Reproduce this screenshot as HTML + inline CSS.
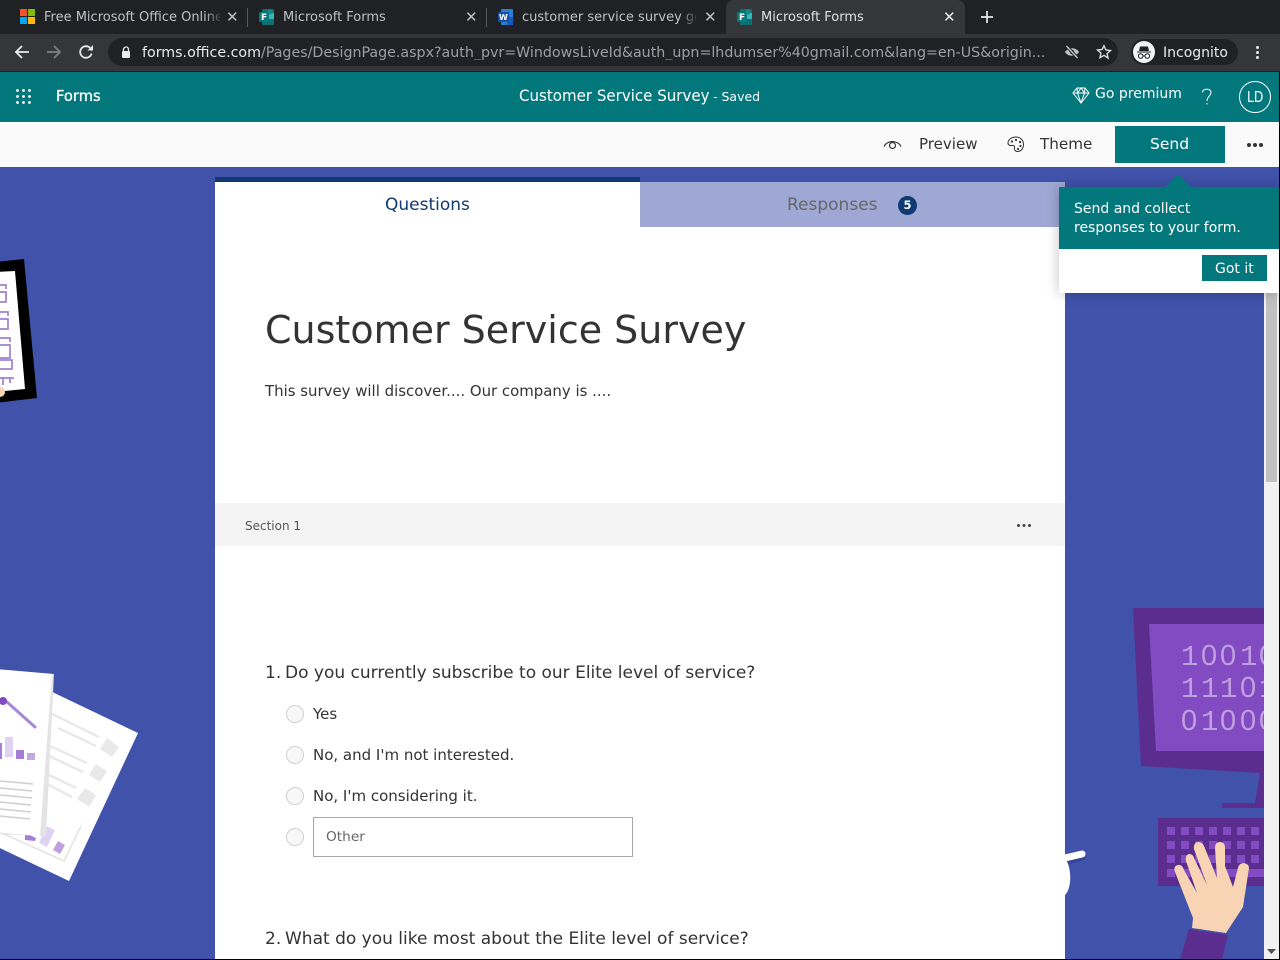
<!DOCTYPE html>
<html><head><meta charset="utf-8"><title>Microsoft Forms</title>
<style>
html,body{margin:0;padding:0;width:1280px;height:960px;overflow:hidden;background:#4052aa}
body{position:relative;font-family:"DejaVu Sans",sans-serif}
.a{position:absolute}
.t{position:absolute;white-space:nowrap;line-height:1}
.c{color:#333}
.sep{position:absolute;top:8px;width:1px;height:19px;background:#55585c}
.radio{position:absolute;left:286px;width:16px;height:16px;border:1px solid #d0d0d0;border-radius:50%;background:#f8f8f8}
svg{position:absolute;overflow:visible}
</style></head><body>

<!-- browser chrome -->
<div class="a" style="left:0;top:0;width:1280px;height:34px;background:#202124"></div>
<div class="a" style="left:0;top:34px;width:1280px;height:37px;background:#35363a"></div>
<div class="a" style="left:0;top:71px;width:1280px;height:1px;background:#1f2124"></div>
<div class="a" style="left:726px;top:0;width:239px;height:34px;background:#35363a;border-radius:8px 8px 0 0"></div>

<div class="a" style="left:20px;top:9px;width:7px;height:7px;background:#f35325"></div>
<div class="a" style="left:28px;top:9px;width:7px;height:7px;background:#81bc06"></div>
<div class="a" style="left:20px;top:17px;width:7px;height:7px;background:#05a6f0"></div>
<div class="a" style="left:28px;top:17px;width:7px;height:7px;background:#ffba08"></div>
<div class="t" style="left:44px;top:11px;font-size:13px;color:#bdc1c6;width:176px;overflow:hidden">Free Microsoft Office Online</div>
<div class="a" style="left:205px;top:6px;width:18px;height:20px;background:linear-gradient(90deg,rgba(32,33,36,0),#202124)"></div>
<div class="t" style="left:226px;top:10px;font-size:15px;color:#bdc1c6">✕</div>
<div class="sep" style="left:247px"></div>

<svg style="left:259px;top:9px" width="16" height="16" viewBox="0 0 16 16"><rect x="3" y="0" width="12" height="16" rx="1" fill="#0f6f72"/><rect x="8" y="4" width="7" height="6" fill="#37b5b5"/><circle cx="11" cy="3" r="2.5" fill="#14898c"/><rect x="0" y="3" width="10" height="10" rx="1" fill="#057a78"/><text x="2" y="11.200" font-size="9" font-weight="bold" fill="#fff" font-family="DejaVu Sans">F</text></svg>
<div class="t" style="left:283px;top:11px;font-size:13px;color:#bdc1c6">Microsoft Forms</div>
<div class="t" style="left:465px;top:10px;font-size:15px;color:#bdc1c6">✕</div>
<div class="sep" style="left:486px"></div>

<svg style="left:498px;top:9px" width="16" height="16" viewBox="0 0 16 16"><rect x="3" y="0" width="12" height="16" rx="1" fill="#2b7cd3"/><rect x="9" y="8" width="6" height="8" fill="#185abd"/><rect x="0" y="3" width="11" height="10" rx="1" fill="#1650aa"/><text x="1" y="11" font-size="8" font-weight="bold" fill="#fff" font-family="DejaVu Sans">W</text></svg>
<div class="t" style="left:522px;top:11px;font-size:13px;color:#bdc1c6;width:174px;overflow:hidden">customer service survey go</div>
<div class="a" style="left:680px;top:6px;width:18px;height:20px;background:linear-gradient(90deg,rgba(32,33,36,0),#202124)"></div>
<div class="t" style="left:704px;top:10px;font-size:15px;color:#bdc1c6">✕</div>

<svg style="left:737px;top:9px" width="16" height="16" viewBox="0 0 16 16"><rect x="3" y="0" width="12" height="16" rx="1" fill="#0f6f72"/><rect x="8" y="4" width="7" height="6" fill="#37b5b5"/><circle cx="11" cy="3" r="2.5" fill="#14898c"/><rect x="0" y="3" width="10" height="10" rx="1" fill="#057a78"/><text x="2" y="11.200" font-size="9" font-weight="bold" fill="#fff" font-family="DejaVu Sans">F</text></svg>
<div class="t" style="left:761px;top:11px;font-size:13px;color:#dfe1e5">Microsoft Forms</div>
<div class="t" style="left:943px;top:10px;font-size:15px;color:#e8eaed">✕</div>
<svg style="left:980px;top:10px" width="14" height="14" viewBox="0 0 14 14"><path d="M7 1v12M1 7h12" stroke="#e8eaed" stroke-width="1.7"/></svg>

<!-- toolbar -->
<svg style="left:14px;top:44px" width="16" height="16" viewBox="0 0 16 16" fill="none" stroke="#e8eaed" stroke-width="1.8"><path d="M15 8H2M8 2L2 8l6 6"/></svg>
<svg style="left:46px;top:44px" width="16" height="16" viewBox="0 0 16 16" fill="none" stroke="#7d7f83" stroke-width="1.8"><path d="M1 8h13M8 2l6 6-6 6"/></svg>
<svg style="left:78px;top:44px" width="16" height="16" viewBox="0 0 16 16" fill="none"><path d="M13.600 9.500A5.800 5.800 0 1 1 12 3.800" stroke="#e8eaed" stroke-width="1.800"/><path d="M9.500 6.500H15V1z" fill="#e8eaed"/></svg>
<div class="a" style="left:108px;top:38px;width:1010px;height:28px;border-radius:14px;background:#202124"></div>
<svg style="left:121px;top:46px" width="10" height="12" viewBox="0 0 10 12"><path d="M2.500 5V3.500a2.500 2.500 0 0 1 5 0V5" fill="none" stroke="#e8eaed" stroke-width="1.300"/><rect x="1" y="5" width="8" height="7" rx="1" fill="#e8eaed"/></svg>
<div class="t" style="left:142px;top:46px;font-size:14.230px;color:#9aa0a6;width:905px;overflow:hidden"><span style="color:#e8eaed">forms.office.com</span>/Pages/DesignPage.aspx?auth_pvr=WindowsLiveId&amp;auth_upn=lhdumser%40gmail.com&amp;lang=en-US&amp;origin...</div>
<svg style="left:1064px;top:45px" width="16" height="14" viewBox="0 0 16 14"><path d="M1 7c3-5 11-5 14 0-3 5-11 5-14 0z" fill="#bdc1c6"/><circle cx="8" cy="7" r="2.200" fill="#202124"/><path d="M2.500 1l11 12" stroke="#202124" stroke-width="3.400"/><path d="M2.500 1l11 12" stroke="#bdc1c6" stroke-width="1.500"/></svg>
<svg style="left:1096px;top:44px" width="16" height="16" viewBox="0 0 16 16"><path d="M8 1.800l1.900 4.200 4.600.5-3.400 3.100.9 4.500L8 11.300l-4 2.300.9-4.500-3.400-3.100 4.600-.5z" fill="none" stroke="#dadce0" stroke-width="1.400"/></svg>
<div class="a" style="left:1131px;top:39px;width:107px;height:26px;border-radius:13px;background:#202124"></div>
<svg style="left:1133px;top:41px" width="22" height="22" viewBox="0 0 22 22"><circle cx="11" cy="11" r="11" fill="#f1f3f4"/><path d="M4 10.500h14v1H4zM7 5.500h8l1 4.500H6z" fill="#202124"/><circle cx="7.700" cy="15" r="2.300" fill="none" stroke="#202124" stroke-width="1"/><circle cx="14.300" cy="15" r="2.300" fill="none" stroke="#202124" stroke-width="1"/><path d="M10 15h2" stroke="#202124"/></svg>
<div class="t" style="left:1163px;top:46px;font-size:14px;color:#e8eaed">Incognito</div>
<div class="a" style="left:1256px;top:46px;width:3px;height:3px;border-radius:50%;background:#e8eaed;box-shadow:0 5px 0 #e8eaed,0 10px 0 #e8eaed"></div>

<!-- teal header -->
<div class="a" style="left:0;top:72px;width:1280px;height:50px;background:#03787c"></div>
<svg style="left:16px;top:89px" width="16" height="16" viewBox="0 0 16 16" fill="#fff"><circle cx="1.500" cy="1.500" r="1.400"/><circle cx="7.500" cy="1.500" r="1.400"/><circle cx="13.500" cy="1.500" r="1.400"/><circle cx="1.500" cy="7.500" r="1.400"/><circle cx="7.500" cy="7.500" r="1.400"/><circle cx="13.500" cy="7.500" r="1.400"/><circle cx="1.500" cy="13.500" r="1.400"/><circle cx="7.500" cy="13.500" r="1.400"/><circle cx="13.500" cy="13.500" r="1.400"/></svg>
<div class="t" style="left:56px;top:89px;font-size:15px;color:#fff;-webkit-text-stroke:.3px #fff;transform:scaleX(.98);transform-origin:left">Forms</div>
<div class="t" style="left:519px;top:88px;font-size:16px;color:#fff;transform:scaleX(.94);transform-origin:left">Customer Service Survey</div>
<div class="t" style="left:713px;top:91px;font-size:12.500px;color:#fff">- Saved</div>
<svg style="left:1072px;top:87px" width="18" height="17" viewBox="0 0 18 17" fill="none" stroke="#fff" stroke-width="1"><path d="M5 1h8l4 5-8 10L1 6zM1 6h16M5.500 6L9 16l3.500-10M5 1l.5 5L9 1l3.500 5L13 1"/></svg>
<div class="t" style="left:1095px;top:87px;font-size:14px;color:#fff">Go premium</div>
<svg style="left:1201px;top:88px" width="12" height="18" viewBox="0 0 12 18" fill="none" stroke="#fff" stroke-width="1"><path d="M1.500 4.500C1.500 0 10 0 10 4.500 10 8 6 8.500 6 13"/><path d="M6 15v1.500"/></svg>
<div class="a" style="left:1239px;top:81px;width:30px;height:30px;border:1px solid #fff;border-radius:50%"></div>
<div class="t" style="left:1247px;top:90px;font-size:15px;color:#fff;transform:scaleX(.82);transform-origin:left">LD</div>

<!-- command bar -->
<div class="a" style="left:0;top:122px;width:1280px;height:45px;background:#fafafa"></div>
<svg style="left:883px;top:137px" width="19" height="15" viewBox="0 0 19 15" fill="none" stroke="#333" stroke-width="1.200"><path d="M1 9.500C4 3 15 3 18 9.500"/><circle cx="9.500" cy="8.500" r="3"/></svg>
<div class="t" style="left:919px;top:137px;font-size:15.500px;color:#333;transform:scaleX(.97);transform-origin:left">Preview</div>
<svg style="left:1007px;top:136px" width="18" height="17" viewBox="0 0 18 17" fill="none" stroke="#333" stroke-width="1"><path d="M9 1C4 1 1 4 1 7c0 2 2 3 4 2.500 2-.5 3 1 2.500 2.500-.5 2 1 3.500 3 3.500 3.500 0 6-3 6-7S13.500 1 9 1z"/><circle cx="5" cy="5.500" r=".6" fill="#333"/><circle cx="9" cy="4" r=".6" fill="#333"/><circle cx="13" cy="6" r=".6" fill="#333"/><circle cx="13.500" cy="10" r=".6" fill="#333"/><circle cx="11" cy="13" r=".6" fill="#333"/></svg>
<div class="t" style="left:1040px;top:137px;font-size:15.500px;color:#333;transform:scaleX(.98);transform-origin:left">Theme</div>
<div class="a" style="left:1115px;top:126px;width:110px;height:37px;background:#03787c"></div>
<div class="t" style="left:1150px;top:137px;font-size:15.500px;color:#fff">Send</div>
<div class="a" style="left:1247px;top:143px;width:4px;height:4px;border-radius:50%;background:#333;box-shadow:6px 0 0 #333,12px 0 0 #333"></div>

<!-- background illustrations -->
<svg style="left:0;top:167px" width="215" height="793" viewBox="0 167 215 793">
  <path d="M-5 262L24 259 37 398 -5 403z" fill="#000"/>
  <path d="M-5 272L15 271 25 389 -5 392z" fill="#fff"/>
  <g fill="none" stroke="#a080d0" stroke-width="1.700">
    <path d="M-2 285H6V289M-2 292H6V302H-2M-2 312H8V316M-2 319H8V329H-2M-2 338H10V342M-2 345H10V358H-2M-2 360H12V369H-2M-2 378H14M3 378V385M10 378V383"/>
  </g>
  <circle cx="0" cy="392" r="5" fill="#f8d3b4"/>
  <path d="M46 689L138 733 69 881 -15 841 -15 750z" fill="#fff"/>
  <g fill="none" stroke="#e9e9e9" stroke-width="2.600">
    <path d="M50 713L99 737M58 728L96 746M48 745L87 763M47 755L83 772M45 773L76 788M45 783L72 797"/>
  </g>
  <path d="M81 826L64 861 -5 830" fill="none" stroke="#e6e6e6" stroke-width="1.800"/>
  <path d="M107 738L119 747 112 757 100 749zM96 764L107 771 100 782 89 775zM85 788L96 795 89 807 77 799z" fill="#e9e9e9"/>
  <path d="M46 826L55 830 47 847 39 843z" fill="#e0d2f2"/>
  <path d="M58 841L65 845 60 854 53 850z" fill="#bf9fdf"/>
  <path d="M25 833L36 838 35 841 25 840z" fill="#a47dd6"/>
  <path d="M-5 669L54 674 46 836 -5 834z" fill="#e4e4e4"/>
  <path d="M-5 669L52 674 40 836 -5 832z" fill="#fff"/>
  <path d="M7 702L35 727" stroke="#a986d8" stroke-width="3" stroke-linecap="round"/>
  <circle cx="3" cy="701" r="4" fill="#7f4bbd"/>
  <rect x="0" y="743" width="2" height="16" fill="#a47dd6"/>
  <rect x="5" y="737" width="8" height="20" fill="#e0d2f2"/>
  <rect x="16" y="750" width="8" height="9" fill="#a47dd6"/>
  <rect x="27" y="753" width="8" height="7" fill="#c4a8e4"/>
  <g stroke="#cfcfcf" stroke-width="1.600"><path d="M0 781L33 784M0 788L32 791M0 795L32 798M0 802L31 805M0 809L31 812M0 816L30 819"/></g>
</svg>

<svg style="left:1065px;top:590px" width="199" height="370" viewBox="1065 590 199 370">
  <path d="M1133 608H1264V808H1222V803H1255L1260 773L1141 766Z" fill="#5b2d8e"/>
  <path d="M1149 624H1264V751H1156z" fill="#834bc2"/>
  <g font-size="29" fill="#bf9fdf" font-family="Liberation Mono,monospace">
    <text y="665" x="1181 1201 1220 1240 1259">1<tspan font-family="Liberation Sans">00</tspan>1<tspan font-family="Liberation Sans">0</tspan></text>
    <text y="697" x="1181 1201 1220 1240 1259">111<tspan font-family="Liberation Sans">0</tspan>1</text>
    <text y="730" x="1181 1201 1220 1240 1259"><tspan font-family="Liberation Sans">0</tspan>1<tspan font-family="Liberation Sans">000</tspan></text>
  </g>
  <rect x="1158" y="818" width="106" height="68" fill="#5b2d8e"/>
  <g fill="#834bc2">
    <rect x="1167" y="827" width="8" height="8"/><rect x="1181" y="827" width="8" height="8"/><rect x="1195" y="827" width="8" height="8"/><rect x="1209" y="827" width="8" height="8"/><rect x="1223" y="827" width="8" height="8"/><rect x="1237" y="827" width="8" height="8"/><rect x="1251" y="827" width="8" height="8"/>
    <rect x="1167" y="841" width="8" height="8"/><rect x="1181" y="841" width="8" height="8"/><rect x="1195" y="841" width="8" height="8"/><rect x="1209" y="841" width="8" height="8"/><rect x="1223" y="841" width="8" height="8"/><rect x="1237" y="841" width="8" height="8"/><rect x="1251" y="841" width="8" height="8"/>
    <rect x="1167" y="855" width="8" height="8"/><rect x="1181" y="855" width="8" height="8"/><rect x="1195" y="855" width="8" height="8"/><rect x="1209" y="855" width="8" height="8"/><rect x="1223" y="855" width="8" height="8"/><rect x="1237" y="855" width="8" height="8"/><rect x="1251" y="855" width="8" height="8"/>
    <rect x="1167" y="869" width="8" height="8"/><rect x="1181" y="869" width="83" height="8"/>
  </g>
  <path d="M1192 928L1193 918 1175 872Q1173 866 1178 865 1182 864 1184 870L1197 893 1186 861Q1185 855 1189 854 1193 854 1194 858L1207 885 1194 849Q1193 843 1198 842 1202 842 1204 846L1217 878 1215 848Q1215 842 1220 842 1225 842 1225 848L1225 866 1233 887 1238 868Q1239 863 1244 863 1249 864 1249 868L1243 907 1226 933Z" fill="#f8d3b4"/>
  <path d="M1189 929L1228 935 1222 960H1180z" fill="#5b2d8e"/>
  <path d="M1065 862L1082 857" stroke="#36459a" stroke-width="7" stroke-linecap="round"/>
  <path d="M1065 858L1082 854" stroke="#fff" stroke-width="7" stroke-linecap="round"/>
  <path d="M1065 858C1072 868 1072 888 1065 895z" fill="#fff"/>
</svg>

<!-- main card -->
<div class="a" style="left:215px;top:182px;width:850px;height:778px;background:#fff"></div>
<div class="a" style="left:215px;top:177px;width:425px;height:5px;background:#0f3a73"></div>
<div class="a" style="left:640px;top:182px;width:425px;height:45px;background:#9fa8d5"></div>
<div class="t" style="left:385px;top:197px;font-size:17px;color:#0f3a73">Questions</div>
<div class="t" style="left:787px;top:197px;font-size:17px;color:#666">Responses</div>
<div class="a" style="left:898px;top:196px;width:19px;height:19px;border-radius:50%;background:#0f3a73;color:#fff;font-size:11.500px;font-weight:bold;line-height:18px;text-align:center">5</div>

<div class="t c" style="left:265px;top:311px;font-size:38px">Customer Service Survey</div>
<div class="t c" style="left:265px;top:384px;font-size:15px;transform:scaleX(.995);transform-origin:left">This survey will discover.... Our company is ....</div>

<div class="a" style="left:215px;top:503px;width:850px;height:43px;background:#f4f4f4"></div>
<div class="t" style="left:245px;top:520px;font-size:12px;color:#555">Section 1</div>
<div class="a" style="left:1017px;top:524px;width:3px;height:3px;border-radius:50%;background:#444;box-shadow:5.500px 0 0 #444,11px 0 0 #444"></div>

<div class="t c" style="left:265px;top:665px;font-size:17px">1.</div>
<div class="t c" style="left:285px;top:665px;font-size:17px">Do you currently subscribe to our Elite level of service?</div>
<div class="radio" style="top:705px"></div>
<div class="t c" style="left:313px;top:707px;font-size:15px">Yes</div>
<div class="radio" style="top:746px"></div>
<div class="t c" style="left:313px;top:748px;font-size:15px">No, and I'm not interested.</div>
<div class="radio" style="top:787px"></div>
<div class="t c" style="left:313px;top:789px;font-size:15px">No, I'm considering it.</div>
<div class="radio" style="top:828px"></div>
<div class="a" style="left:313px;top:817px;width:318px;height:38px;border:1px solid #a6a6a6;background:#fff"></div>
<div class="t" style="left:326px;top:831px;font-size:13.700px;color:#666">Other</div>
<div class="t c" style="left:265px;top:931px;font-size:17px">2.</div>
<div class="t c" style="left:285px;top:931px;font-size:17px">What do you like most about the Elite level of service?</div>

<!-- scrollbar -->
<div class="a" style="left:1264px;top:187px;width:15px;height:772px;background:#f1f1f1"></div>
<div class="a" style="left:1266px;top:280px;width:11px;height:202px;background:#c1c1c1"></div>
<svg style="left:1267px;top:949px" width="9" height="6" viewBox="0 0 9 6"><path d="M0 0h9L4.500 5z" fill="#505050"/></svg>
<div class="a" style="left:0;top:959px;width:1280px;height:1px;background:#000"></div>

<!-- teaching bubble -->
<div class="a" style="left:1059px;top:187px;width:221px;height:106px;background:#fff;box-shadow:0 0 12px rgba(0,0,0,.25)"></div>
<div class="a" style="left:1059px;top:187px;width:221px;height:62px;background:#03787c"></div>
<svg style="left:1164px;top:174px" width="28" height="14" viewBox="0 0 28 14"><path d="M14 0L28 14H0z" fill="#03787c"/></svg>
<div class="t" style="left:1074px;top:202px;font-size:14px;color:#fff">Send and collect</div>
<div class="t" style="left:1074px;top:221px;font-size:14px;color:#fff">responses to your form.</div>
<div class="a" style="left:1202px;top:255px;width:65px;height:26px;background:#03787c"></div>
<div class="t" style="left:1215px;top:262px;font-size:14px;color:#fff">Got it</div>
<div class="a" style="left:1279px;top:72px;width:1px;height:888px;background:#000"></div>
</body></html>
